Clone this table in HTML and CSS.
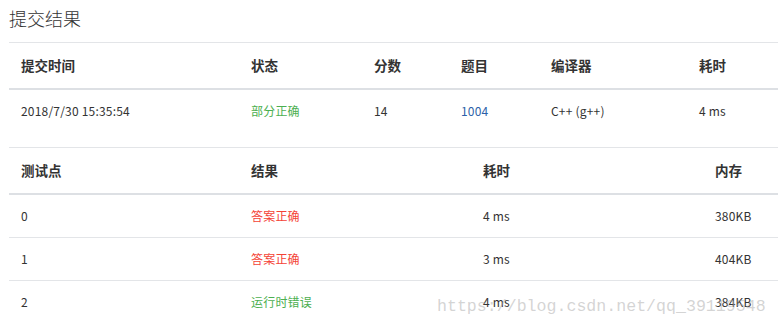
FILE: index.html
```html
<!DOCTYPE html>
<html lang="zh">
<head>
<meta charset="utf-8">
<title>提交结果</title>
<link rel="stylesheet" href="styles.css">
</head>
<body>
<div class="page">
  <h1 class="title">提交结果</h1>
  <table class="tbl t1">
    <colgroup>
      <col style="width:230px"><col style="width:123px"><col style="width:87px"><col style="width:90px"><col style="width:148px"><col>
    </colgroup>
    <thead>
      <tr><th>提交时间</th><th>状态</th><th>分数</th><th>题目</th><th>编译器</th><th>耗时</th></tr>
    </thead>
    <tbody>
      <tr class="last"><td>2018/7/30 15:35:54</td><td class="ok">部分正确</td><td>14</td><td><a class="link" href="#">1004</a></td><td>C++ (g++)</td><td>4 ms</td></tr>
    </tbody>
  </table>
  <table class="tbl t2">
    <colgroup>
      <col style="width:230px"><col style="width:232px"><col style="width:232px"><col>
    </colgroup>
    <thead>
      <tr><th>测试点</th><th>结果</th><th>耗时</th><th>内存</th></tr>
    </thead>
    <tbody>
      <tr><td>0</td><td class="ac">答案正确</td><td>4 ms</td><td>380KB</td></tr>
      <tr><td>1</td><td class="ac">答案正确</td><td>3 ms</td><td>404KB</td></tr>
      <tr class="last"><td>2</td><td class="ok">运行时错误</td><td>4 ms</td><td>384KB</td></tr>
    </tbody>
  </table>
  <div class="watermark">https://blog.csdn.net/qq_39119548</div>
</div>
</body>
</html>
```
FILE: styles.css
```css
html, body {
  margin: 0;
  padding: 0;
  background: #fff;
}
body {
  font-family: "Noto Sans CJK SC", "Noto Sans", sans-serif;
  color: #333;
  width: 778px;
  height: 330px;
  overflow: hidden;
}
.page {
  position: relative;
  padding-left: 9px;
  height: 330px;
}
.title {
  margin: 0;
  padding-top: 6px;
  height: 42px;
  box-sizing: border-box;
  font-size: 18px;
  font-weight: 300;
  line-height: 24px;
  color: #333;
}
.tbl {
  border-collapse: collapse;
  table-layout: fixed;
  width: 769px;
  border-top: 1px solid #e3e5e8;
}
.tbl th {
  height: 46px;
  padding: 0 0 0 12px;
  text-align: left;
  font-size: 13.5px;
  font-weight: 700;
  color: #333;
  border-bottom: 2px solid #dde0e4;
  box-sizing: border-box;
}
.t2 th {
  height: 47px;
}
.tbl td {
  height: 43px;
  padding: 0 0 0 12px;
  font-size: 12px;
  letter-spacing: 0.2px;
  color: #333;
  border-bottom: 1px solid #e3e5e8;
  box-sizing: border-box;
}
.t1 .last td {
  border-bottom: none;
  height: 42px;
}
.t1 {
  margin-bottom: 16px;
}
.t2 .last td {
  border-bottom: none;
}
.tbl td.ok { color: #4caf50; }
.tbl td.ac { color: #f44336; }
.link { color: #2c5fa8; text-decoration: none; }
.watermark {
  position: absolute;
  left: 437px;
  top: 297px;
  font-family: "Liberation Mono", monospace;
  font-size: 16.6px;
  color: rgba(170, 170, 170, 0.5);
  white-space: nowrap;
  pointer-events: none;
}
```
